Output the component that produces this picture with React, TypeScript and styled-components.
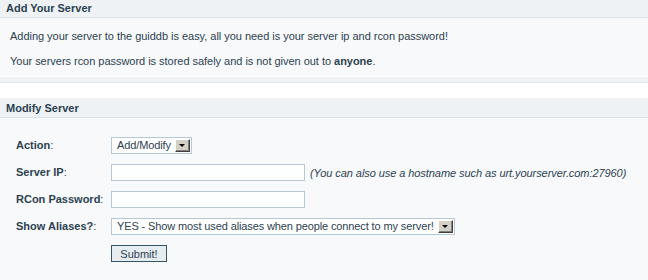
import React from "react";
import styled, { createGlobalStyle } from "styled-components";

const GlobalStyle = createGlobalStyle`
  html, body {
    margin: 0;
    padding: 0;
    background: #ffffff;
  }
  body {
    font-family: "Liberation Sans", Arial, sans-serif;
    font-size: 11px;
    color: #2d4150;
  }
`;

const App: React.FC = () => {
  return (
    <Page>
      <GlobalStyle />
      <Panel>
        <Header>Add Your Server</Header>
        <Body>
          <Text>
            Adding your server to the guiddb is easy, all you need is your
            server ip and rcon password!
          </Text>
          <Text>
            Your servers rcon password is stored safely and is not given out to{" "}
            <b>anyone</b>.
          </Text>
        </Body>
        <Footer />
      </Panel>

      <Panel>
        <Header>Modify Server</Header>
        <FormBody>
          <Label>
            <b>Action</b>:
          </Label>
          <Field>
            <Select>
              <SelectText>Add/Modify</SelectText>
              <Arrow>
                <ArrowGlyph />
              </Arrow>
            </Select>
          </Field>

          <Label>
            <b>Server IP</b>:
          </Label>
          <Field>
            <Input type="text" />
            <Hint>(You can also use a hostname such as urt.yourserver.com:27960)</Hint>
          </Field>

          <Label>
            <b>RCon Password</b>:
          </Label>
          <Field>
            <Input type="password" />
          </Field>

          <Label>
            <b>Show Aliases?</b>:
          </Label>
          <Field>
            <Select>
              <SelectText>
                YES - Show most used aliases when people connect to my server!
              </SelectText>
              <Arrow>
                <ArrowGlyph />
              </Arrow>
            </Select>
          </Field>

          <span />
          <Field>
            <Button type="button">Submit!</Button>
          </Field>
        </FormBody>
      </Panel>
    </Page>
  );
};

export default App;

// Styled

const Page = styled.div`
  width: 648px;
  height: 282px;
  margin-top: -2px;
  overflow: hidden;
  display: flex;
  flex-direction: column;
  gap: 15px;
`;

const Panel = styled.div`
  display: flex;
  flex-direction: column;
`;

const Header = styled.div`
  height: 19px;
  line-height: 20px;
  padding: 0 6px;
  background: #eef2f5;
  border-bottom: 1px solid #d9e2e9;
  font-weight: bold;
  font-size: 11px;
  color: #2b4151;
`;

const Body = styled.div`
  background: #f7f9fb;
  padding: 12px 10px 8px;
  display: flex;
  flex-direction: column;
  gap: 12px;
`;

const Text = styled.p`
  margin: 0;
  line-height: 13px;
  letter-spacing: -0.03px;
  color: #2d4150;
`;

const Footer = styled.div`
  height: 5px;
  background: #eef2f5;
  border-top: 1px solid #ffffff;
  border-bottom: 1px solid #e3e9ee;
`;

const FormBody = styled.div`
  background: #f7f9fb;
  padding: 19px 0 0 16px;
  height: 200px;
  display: grid;
  grid-template-columns: 95px 1fr;
  grid-auto-rows: 17px;
  row-gap: 10px;
  align-items: center;
`;

const Label = styled.div`
  line-height: 17px;
  white-space: nowrap;
  color: #2d4150;
`;

const Field = styled.div`
  display: flex;
  align-items: center;
  gap: 5px;
  height: 17px;
`;

const Select = styled.div`
  box-sizing: border-box;
  height: 17px;
  display: inline-flex;
  align-items: center;
  background: #ffffff;
  border: 1px solid #b6c8d3;
  padding: 0 1px 0 5px;
  gap: 4px;
`;

const SelectText = styled.span`
  line-height: 15px;
  white-space: nowrap;
  letter-spacing: -0.12px;
  color: #2d4150;
`;

const Arrow = styled.span`
  box-sizing: border-box;
  width: 15px;
  height: 13px;
  display: flex;
  align-items: center;
  justify-content: center;
  background: #d4d0c8;
  border-top: 1px solid #ffffff;
  border-left: 1px solid #ffffff;
  border-right: 1px solid #404040;
  border-bottom: 1px solid #404040;
  box-shadow: inset -1px -1px 0 #808080;
`;

const ArrowGlyph = styled.span`
  width: 0;
  height: 0;
  border-left: 3px solid transparent;
  border-right: 3px solid transparent;
  border-top: 3px solid #000000;
`;

const Input = styled.input`
  box-sizing: border-box;
  width: 194px;
  height: 17px;
  margin: 0;
  padding: 0 3px;
  border: 1px solid #b6c8d3;
  background: #fdfefe;
  outline: none;
  font-family: inherit;
  font-size: 11px;
`;

const Hint = styled.span`
  font-style: italic;
  white-space: nowrap;
  letter-spacing: -0.07px;
  color: #2d4150;
`;

const Button = styled.button`
  box-sizing: border-box;
  width: 56px;
  height: 17px;
  margin: 0;
  padding: 0;
  border: 1px solid #3b5464;
  background: #e6edf1;
  font-family: inherit;
  font-size: 11px;
  color: #2d4150;
  cursor: pointer;
`;
